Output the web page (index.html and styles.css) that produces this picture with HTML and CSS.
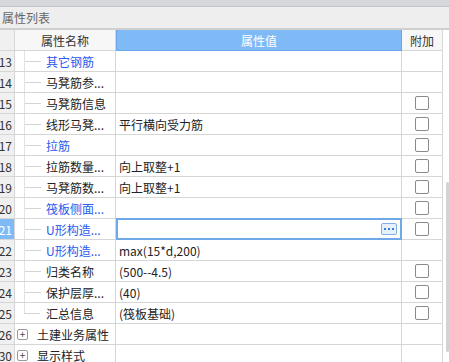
FILE: index.html
```html
<!DOCTYPE html>
<html lang="zh-CN">
<head>
    <meta charset="UTF-8">
    <title>属性列表</title>
    <link rel="stylesheet" href="styles.css">
</head>
<body>
    <div class="topbar"></div>
    <div class="titlebar">属性列表</div>
    <div class="body">
        <div class="grid">
            <div class="row head">
                <div class="c num"></div>
                <div class="c name">属性名称</div>
                <div class="c val active">属性值</div>
                <div class="c add">附加</div>
            </div>
            <div class="row">
                <div class="c num">13</div>
                <div class="c name blue"><span class="branch"></span>其它钢筋</div>
                <div class="c val"></div>
                <div class="c add"></div>
            </div>
            <div class="row">
                <div class="c num">14</div>
                <div class="c name"><span class="branch"></span>马凳筋参...</div>
                <div class="c val"></div>
                <div class="c add"></div>
            </div>
            <div class="row">
                <div class="c num">15</div>
                <div class="c name"><span class="branch"></span>马凳筋信息</div>
                <div class="c val"></div>
                <div class="c add"><span class="check"></span></div>
            </div>
            <div class="row">
                <div class="c num">16</div>
                <div class="c name"><span class="branch"></span>线形马凳...</div>
                <div class="c val">平行横向受力筋</div>
                <div class="c add"><span class="check"></span></div>
            </div>
            <div class="row">
                <div class="c num">17</div>
                <div class="c name blue"><span class="branch"></span>拉筋</div>
                <div class="c val"></div>
                <div class="c add"><span class="check"></span></div>
            </div>
            <div class="row">
                <div class="c num">18</div>
                <div class="c name"><span class="branch"></span>拉筋数量...</div>
                <div class="c val">向上取整+1</div>
                <div class="c add"><span class="check"></span></div>
            </div>
            <div class="row">
                <div class="c num">19</div>
                <div class="c name"><span class="branch"></span>马凳筋数...</div>
                <div class="c val">向上取整+1</div>
                <div class="c add"><span class="check"></span></div>
            </div>
            <div class="row">
                <div class="c num">20</div>
                <div class="c name blue"><span class="branch"></span>筏板侧面...</div>
                <div class="c val"></div>
                <div class="c add"><span class="check"></span></div>
            </div>
            <div class="row">
                <div class="c num current">21</div>
                <div class="c name blue"><span class="branch"></span>U形构造...</div>
                <div class="c val editing"><span class="more"><i></i><i></i><i></i></span></div>
                <div class="c add"><span class="check"></span></div>
            </div>
            <div class="row">
                <div class="c num">22</div>
                <div class="c name blue"><span class="branch"></span>U形构造...</div>
                <div class="c val">max(15*d,200)</div>
                <div class="c add"></div>
            </div>
            <div class="row">
                <div class="c num">23</div>
                <div class="c name"><span class="branch"></span>归类名称</div>
                <div class="c val">(500--4.5)</div>
                <div class="c add"><span class="check"></span></div>
            </div>
            <div class="row">
                <div class="c num">24</div>
                <div class="c name"><span class="branch"></span>保护层厚...</div>
                <div class="c val">(40)</div>
                <div class="c add"><span class="check"></span></div>
            </div>
            <div class="row">
                <div class="c num">25</div>
                <div class="c name"><span class="branch last"></span>汇总信息</div>
                <div class="c val">(筏板基础)</div>
                <div class="c add"><span class="check"></span></div>
            </div>
            <div class="row">
                <div class="c num">26</div>
                <div class="c name group"><span class="plus">+</span>土建业务属性</div>
                <div class="c val"></div>
                <div class="c add"></div>
            </div>
            <div class="row">
                <div class="c num">30</div>
                <div class="c name group"><span class="plus">+</span>显示样式</div>
                <div class="c val"></div>
                <div class="c add"></div>
            </div>
        </div>
        <div class="scroll"><div class="thumb"></div></div>
    </div>
</body>
</html>
```

FILE: styles.css
```css
/* General styling */
body {
    margin: 0;
    height: 362px;
    overflow: hidden;
    background-color: #ffffff;
    font-family: "Noto Sans CJK SC", "Noto Sans", sans-serif;
    font-size: 12px;
    color: #222222;
}
.topbar {
    height: 6px;
    background-color: #d6d7db;
    border-bottom: 1px solid #c4c5c9;
}
.titlebar {
    height: 21px;
    line-height: 21px;
    padding-left: 2px;
    background-color: #eeeeee;
    border-bottom: 2px solid #cfcfcf;
    color: #666666;
}
.body {
    display: flex;
}
.grid {
    width: 443px;
}
.scroll {
    width: 6px;
    padding-top: 152px;
}
.thumb {
    width: 3px;
    height: 170px;
    margin-left: 3px;
    border-radius: 2px;
    background-color: #d3d3d3;
}

/* Rows and cells */
.row {
    display: flex;
    height: 21px;
}
.c {
    display: flex;
    align-items: center;
    box-sizing: border-box;
    height: 21px;
    border-right: 1px solid #d6d6d6;
    border-bottom: 1px solid #d6d6d6;
    white-space: nowrap;
    overflow: hidden;
}
.num {
    width: 15px;
    justify-content: flex-end;
    padding-right: 2px;
    background-color: #f0f0f0;
    color: #333333;
}
.num.current {
    background-color: #80baf6;
    color: #ffffff;
}
.name {
    width: 101px;
}
.val {
    width: 286px;
    padding-left: 3px;
}
.add {
    width: 41px;
    justify-content: center;
}
.blue {
    color: #2b59ee;
}

/* Header */
.head .c {
    background-color: #f7f7f7;
    color: #333333;
    justify-content: center;
}
.head .num {
    background-color: #f0f0f0;
}
.head .val.active {
    background-color: #80baf6;
    border: 1px solid #6ca6ea;
    border-top-width: 0;
    color: #ffffff;
    padding-left: 0;
}

/* Tree lines */
.branch {
    align-self: stretch;
    width: 21px;
    margin-left: 9px;
    flex-shrink: 0;
    border-left: 1px solid #e2e2e2;
    background: linear-gradient(#d4d4d4, #d4d4d4) no-repeat 0 50% / 16px 1px;
}
.branch.last {
    border-left: none;
    margin-left: 9px;
    width: 22px;
    background:
        linear-gradient(#d4d4d4, #d4d4d4) no-repeat 0 50% / 16px 1px,
        linear-gradient(#e2e2e2, #e2e2e2) no-repeat 0 0 / 1px 50%;
}
.group {
    padding-left: 2px;
}
.plus {
    width: 9px;
    height: 9px;
    margin-right: 9px;
    border: 1px solid #9a9a9a;
    border-radius: 2px;
    font-size: 10px;
    line-height: 8px;
    text-align: center;
    color: #444444;
    flex-shrink: 0;
}

/* Editing cell */
.val.editing {
    border: 2px solid #6ea8e6;
    justify-content: flex-end;
    padding-right: 3px;
    margin-top: -1px;
    height: 22px;
}
.more {
    display: flex;
    align-items: center;
    justify-content: center;
    gap: 2px;
    width: 14px;
    height: 10px;
    border: 1px solid #7fb0e8;
    border-radius: 2px;
    background-color: #e6f0fb;
}
.more i {
    width: 2px;
    height: 2px;
    background-color: #3d7fd6;
}

/* Checkboxes */
.check {
    width: 12px;
    height: 12px;
    border: 1px solid #8a8a8a;
    border-radius: 2px;
    background-color: #ffffff;
}
```
